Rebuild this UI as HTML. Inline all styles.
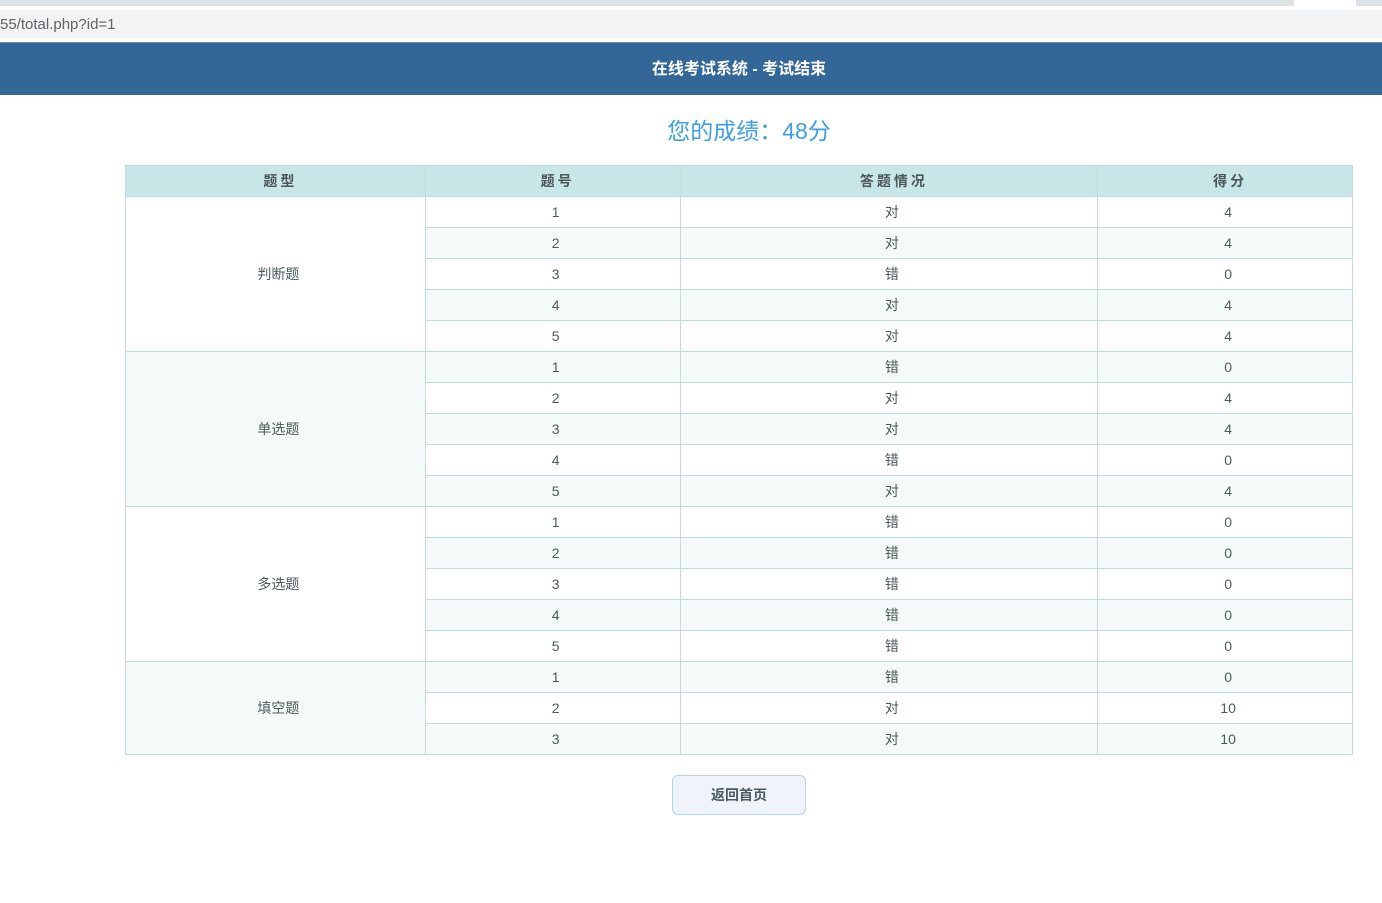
<!DOCTYPE html>
<html><head><meta charset="utf-8"><style>
*{margin:0;padding:0;box-sizing:border-box}
body{width:1382px;height:903px;background:#fff;font-family:"Liberation Sans","Noto Sans CJK SC",sans-serif;position:relative;overflow:hidden}
.top{position:absolute;left:0;top:0;width:1382px;height:6px;background:#dee1e6}
.tab{position:absolute;left:1294px;top:0;width:62px;height:10px;background:#fff;border-radius:0 0 6px 6px}
.tabr{position:absolute;left:1357px;top:0;width:30px;height:6px;background:#dee1e6;border-radius:0 0 0 6px}
.url{position:absolute;left:0;top:10px;width:1382px;height:28px;background:#f1f3f4;font-size:15px;color:#5f6368;line-height:30px;padding-left:0}
.line{position:absolute;left:0;top:42px;width:1382px;height:1px;background:#7a8a9a}
.hdr{position:absolute;left:0;top:43px;width:1382px;height:52px;background:#336798;color:#fff;font-weight:bold;font-size:16px;text-align:center;line-height:50px;padding-left:96px;padding-top:2px}
.score{position:absolute;left:0;top:114px;width:1498px;text-align:center;font-size:23px;color:#3d9ee2;line-height:34px}
table{position:absolute;left:125px;top:165px;border-collapse:collapse;width:1228px;font-size:14px;color:#4b5b5b}
td,th{border:1px solid #c0dbdc;text-align:center;height:31px;padding:0 0 0 6px}
th{background:#c8e6e8;height:31px;font-weight:bold;letter-spacing:3px;font-size:14px;color:#4a5757;padding-left:10px}
tr.a td{background:#f4f9f9}
td.w{background:#fff!important}
.btn{position:absolute;left:672px;top:775px;width:134px;height:40px;background:#eef4fa;border:1px solid #b3d4f5;border-radius:6px;text-align:center;line-height:38px;font-size:14px;font-weight:bold;color:#4a5a5a}
</style></head><body>
<div class="top"></div><div class="tab"></div><div class="tabr"></div>
<div class="url">55/total.php?id=1</div>
<div class="line"></div>
<div class="hdr">在线考试系统 - 考试结束</div>
<div class="score">您的成绩：48分</div>
<table>
<colgroup><col style="width:300px"><col style="width:255px"><col style="width:418px"><col style="width:255px"></colgroup>
<tr><th>题型</th><th>题号</th><th>答题情况</th><th>得分</th></tr>
<tr><td rowspan="5" class="w">判断题</td><td>1</td><td>对</td><td>4</td></tr>
<tr class="a"><td>2</td><td>对</td><td>4</td></tr>
<tr><td>3</td><td>错</td><td>0</td></tr>
<tr class="a"><td>4</td><td>对</td><td>4</td></tr>
<tr><td>5</td><td>对</td><td>4</td></tr>
<tr class="a"><td rowspan="5">单选题</td><td>1</td><td>错</td><td>0</td></tr>
<tr><td>2</td><td>对</td><td>4</td></tr>
<tr class="a"><td>3</td><td>对</td><td>4</td></tr>
<tr><td>4</td><td>错</td><td>0</td></tr>
<tr class="a"><td>5</td><td>对</td><td>4</td></tr>
<tr><td rowspan="5">多选题</td><td>1</td><td>错</td><td>0</td></tr>
<tr class="a"><td>2</td><td>错</td><td>0</td></tr>
<tr><td>3</td><td>错</td><td>0</td></tr>
<tr class="a"><td>4</td><td>错</td><td>0</td></tr>
<tr><td>5</td><td>错</td><td>0</td></tr>
<tr class="a"><td rowspan="3">填空题</td><td>1</td><td>错</td><td>0</td></tr>
<tr><td>2</td><td>对</td><td>10</td></tr>
<tr class="a"><td>3</td><td>对</td><td>10</td></tr>
</table>
<div class="btn">返回首页</div>
</body></html>
